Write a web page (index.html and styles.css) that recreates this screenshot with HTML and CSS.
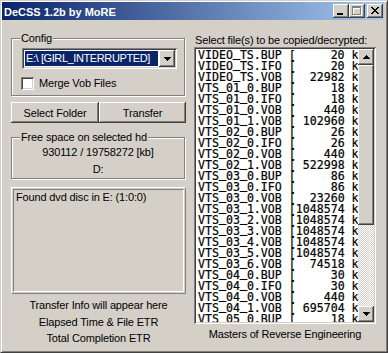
FILE: index.html
```html
<!DOCTYPE html>
<html lang="en">
<head>
    <meta charset="UTF-8">
    <title>DeCSS 1.2b by MoRE</title>
    <link rel="stylesheet" href="styles.css">
</head>
<body>
<div class="window">
    <div class="titlebar">
        <span class="title">DeCSS 1.2b by MoRE</span>
        <div class="caption">
            <span class="cap-btn">
                <svg width="16" height="14" viewBox="0 0 16 14"><rect x="4" y="9" width="6" height="2" fill="#000"/></svg>
            </span>
            <span class="cap-btn">
                <svg width="16" height="14" viewBox="0 0 16 14" shape-rendering="crispEdges">
                    <path d="M4 3h9v9h-9z M5 5v6h7v-6z" fill="#fff" fill-rule="evenodd"/>
                    <path d="M3 2h9v9h-9z M4 4v6h7v-6z" fill="#808080" fill-rule="evenodd"/>
                </svg>
            </span>
            <span class="cap-btn close">
                <svg width="16" height="14" viewBox="0 0 16 14" shape-rendering="crispEdges">
                    <path transform="translate(4 3)" d="M0 0h2v1H0z M6 0h2v1H6z M1 1h2v1H1z M5 1h2v1H5z M2 2h4v1H2z M3 3h2v1H3z M2 4h4v1H2z M1 5h2v1H1z M5 5h2v1H5z M0 6h2v1H0z M6 6h2v1H6z" fill="#000"/>
                </svg>
            </span>
        </div>
    </div>

    <div class="client">
        <div class="left">
            <div class="group config">
                <span class="legend">Config</span>
                <div class="combo">
                    <div class="combo-text"><div class="sel">E:\ [GIRL_INTERRUPTED]</div></div>
                    <span class="raised drop">
                        <svg width="7" height="4" viewBox="0 0 7 4" shape-rendering="crispEdges"><path d="M0 0h7v1H0z M1 1h5v1H1z M2 2h3v1H2z M3 3h1v1H3z" fill="#000"/></svg>
                    </span>
                </div>
                <label class="check"><span class="checkbox"></span>Merge Vob Files</label>
            </div>

            <div class="btn-row">
                <button class="raised btn folder">Select Folder</button>
                <button class="raised btn transfer">Transfer</button>
            </div>

            <div class="group space">
                <span class="legend">Free space on selected hd</span>
                <div>930112 / 19758272 [kb]</div>
                <div>D:</div>
            </div>

            <div class="log">
                <div class="log-inner">Found dvd disc in E: (1:0:0)</div>
            </div>

            <div class="status">
                <div>Transfer Info will appear here</div>
                <div>Elapsed Time &amp; File ETR</div>
                <div>Total Completion ETR</div>
            </div>
        </div>

        <div class="right">
            <div class="list-label">Select file(s) to be copied/decrypted:</div>
            <div class="listbox">
                <div class="rows" id="rows"></div>
                <div class="scrollbar">
                    <span class="raised sb-btn">
                        <svg width="7" height="4" viewBox="0 0 7 4" shape-rendering="crispEdges"><path d="M3 0h1v1H3z M2 1h3v1H2z M1 2h5v1H1z M0 3h7v1H0z" fill="#000"/></svg>
                    </span>
                    <span class="raised thumb"></span>
                    <span class="track"></span>
                    <span class="raised sb-btn">
                        <svg width="7" height="4" viewBox="0 0 7 4" shape-rendering="crispEdges"><path d="M0 0h7v1H0z M1 1h5v1H1z M2 2h3v1H2z M3 3h1v1H3z" fill="#000"/></svg>
                    </span>
                </div>
            </div>
            <div class="credit">Masters of Reverse Engineering</div>
        </div>
    </div>
</div>

<script>
    // file name + size in kb, as listed from the disc
    const files = [
        ['VIDEO_TS.BUP', 20], ['VIDEO_TS.IFO', 20], ['VIDEO_TS.VOB', 22982],
        ['VTS_01_0.BUP', 18], ['VTS_01_0.IFO', 18], ['VTS_01_0.VOB', 440], ['VTS_01_1.VOB', 102960],
        ['VTS_02_0.BUP', 26], ['VTS_02_0.IFO', 26], ['VTS_02_0.VOB', 440], ['VTS_02_1.VOB', 522998],
        ['VTS_03_0.BUP', 86], ['VTS_03_0.IFO', 86], ['VTS_03_0.VOB', 23260],
        ['VTS_03_1.VOB', 1048574], ['VTS_03_2.VOB', 1048574], ['VTS_03_3.VOB', 1048574],
        ['VTS_03_4.VOB', 1048574], ['VTS_03_5.VOB', 1048574], ['VTS_03_6.VOB', 74518],
        ['VTS_04_0.BUP', 30], ['VTS_04_0.IFO', 30], ['VTS_04_0.VOB', 440], ['VTS_04_1.VOB', 695704],
        ['VTS_05_0.BUP', 18]
    ];

    document.getElementById('rows').innerHTML = files.map(([name, size]) =>
        name.replace(/_/g, '<span class="us">_</span>') + ' [' + String(size).padStart(7) + ' kb]'
    ).join('\n');
</script>
</body>
</html>
```

FILE: styles.css
```css
* {
    box-sizing: border-box;
}
body {
    margin: 0;
    font-family: "Liberation Sans", Arial, sans-serif;
    font-size: 11px;
    letter-spacing: -0.15px;
    color: #000;
    background: #D4D0C8;
}
.window {
    width: 388px;
    height: 353px;
    overflow: hidden;
    background: #D4D0C8;
    border: 1px solid;
    border-color: #D4D0C8 #404040 #404040 #D4D0C8;
    box-shadow: inset 1px 1px #fff, inset -1px -1px #808080;
    padding: 1px 3px 3px 1px;
}
.titlebar {
    height: 18px;
    display: flex;
    align-items: center;
    background: linear-gradient(to right, #0A246A, #A6CAF0);
    color: #fff;
    font-weight: bold;
    letter-spacing: 0;
    padding: 0 1px 0 2px;
}
.title {
    flex: 1;
    line-height: 18px;
    padding-top: 1px;
}
.caption {
    display: flex;
}
.cap-btn {
    width: 16px;
    height: 14px;
    background: #D4D0C8;
    box-shadow: inset -1px -1px #404040, inset 1px 1px #fff, inset -2px -2px #808080;
}
.cap-btn svg {
    display: block;
}
.cap-btn.close {
    margin-left: 2px;
}
.raised {
    background: #D4D0C8;
    box-shadow: inset -1px -1px #404040, inset 1px 1px #fff, inset -2px -2px #808080;
}
.client {
    display: flex;
    padding-left: 9px;
}
.left {
    width: 175px;
    display: flex;
    flex-direction: column;
}
.group {
    position: relative;
    width: 174px;
    border: 1px solid #808080;
    box-shadow: 1px 1px #fff, inset 1px 1px #fff;
}
.legend {
    position: absolute;
    top: -7px;
    left: 8px;
    padding: 0 1px;
    line-height: 13px;
    background: #D4D0C8;
}
.config {
    margin-top: 18px;
    height: 58px;
    padding: 9px 0 0 10px;
}
.combo {
    display: flex;
    width: 155px;
    height: 21px;
    padding: 2px;
    background: #fff;
    box-shadow: inset 1px 1px #808080, inset -1px -1px #fff, inset 2px 2px #404040, inset -2px -2px #D4D0C8;
}
.combo-text {
    flex: 1;
    min-width: 0;
    padding: 1px;
}
.sel {
    height: 100%;
    line-height: 15px;
    padding-left: 1px;
    background: #0A246A;
    color: #fff;
    letter-spacing: -0.4px;
    white-space: nowrap;
}
.drop {
    width: 16px;
    flex: none;
    display: flex;
    align-items: center;
    justify-content: center;
}
.check {
    display: flex;
    align-items: center;
    gap: 5px;
    margin: 8px 0 0 -1px;
    line-height: 13px;
}
.checkbox {
    width: 13px;
    height: 13px;
    background: #fff;
    box-shadow: inset 1px 1px #808080, inset -1px -1px #fff, inset 2px 2px #404040, inset -2px -2px #D4D0C8;
}
.btn-row {
    display: flex;
    margin-top: 6px;
}
.btn {
    height: 21px;
    border: 0;
    padding: 0;
    font: inherit;
    letter-spacing: inherit;
    color: #000;
}
.folder {
    width: 88px;
}
.transfer {
    width: 87px;
}
.space {
    margin-top: 14px;
    height: 42px;
    padding-top: 6px;
    text-align: center;
    line-height: 17px;
}
.log {
    margin-top: 8px;
    width: 175px;
    height: 107px;
    padding: 1px;
    border: 1px solid;
    border-color: #fff #808080 #808080 #fff;
}
.log-inner {
    height: 100%;
    padding: 1px 2px;
    line-height: 13px;
    border: 1px solid;
    border-color: #808080 #fff #fff #808080;
}
.status {
    margin-top: 3px;
    text-align: center;
    line-height: 16.5px;
}
.right {
    width: 182px;
    margin-left: 8px;
}
.list-label {
    margin-top: 14px;
    padding-left: 1px;
    line-height: 13px;
}
.listbox {
    display: flex;
    height: 277px;
    padding: 2px;
    background: #fff;
    box-shadow: inset 1px 1px #808080, inset -1px -1px #fff, inset 2px 2px #404040, inset -2px -2px #D4D0C8;
}
.rows {
    flex: 1;
    overflow: hidden;
    padding: 1px 0 0 2px;
    font-family: "DejaVu Sans Mono", monospace;
    font-size: 11.6px;
    letter-spacing: 0;
    line-height: 11px;
    white-space: pre;
    -webkit-text-stroke: 0.2px #000;
}
/* the mono font's low line is hairline thin, lift and thicken it */
.us {
    line-height: 0;
    vertical-align: 2px;
    -webkit-text-stroke: 0.6px #000;
}
.scrollbar {
    width: 16px;
    flex: none;
    display: flex;
    flex-direction: column;
}
.sb-btn {
    height: 16px;
    display: flex;
    align-items: center;
    justify-content: center;
}
.thumb {
    height: 160px;
}
.track {
    flex: 1;
    background: repeating-conic-gradient(#fff 0 25%, #D4D0C8 0 50%) 0 0 / 2px 2px;
}
.credit {
    margin-top: 4px;
    text-align: center;
    line-height: 13px;
}
```
